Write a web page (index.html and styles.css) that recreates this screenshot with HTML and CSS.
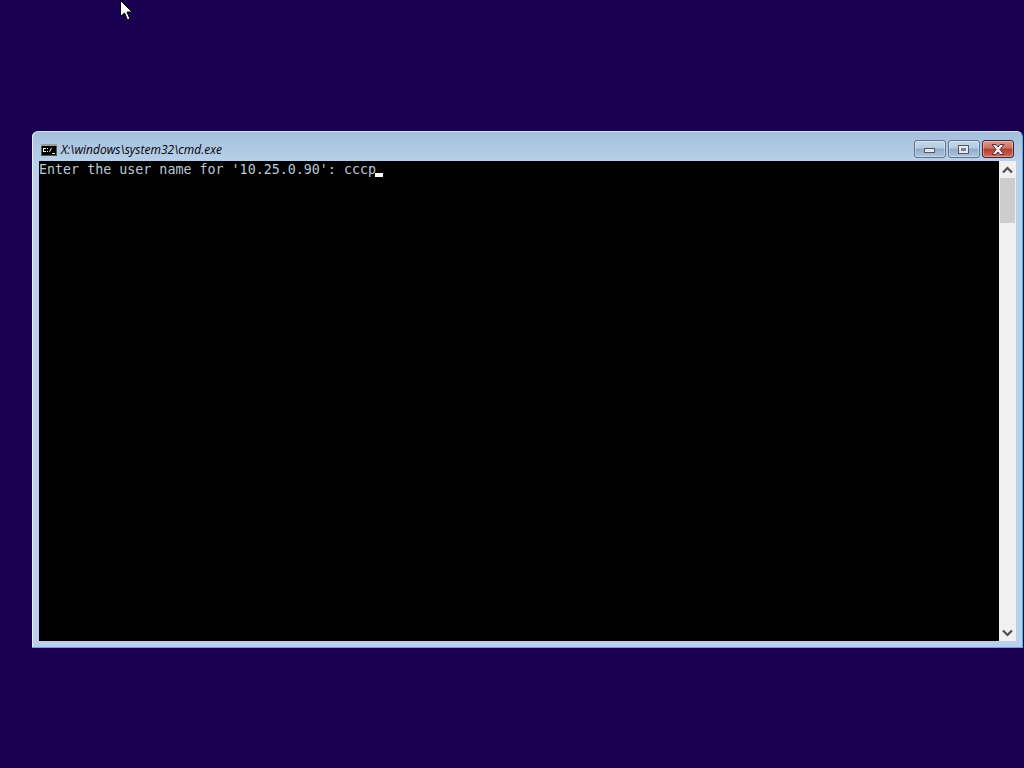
FILE: index.html
```html
<!DOCTYPE html>
<html lang="en">
<head>
<meta charset="utf-8">
<title>cmd.exe</title>
<link rel="stylesheet" href="styles.css">
</head>
<body>
<svg class="cursor" width="13" height="22" viewBox="0 0 13 22"><path d="M.5.5V16.5L4.5 13L7.5 20L10 19L7 12H12Z" fill="#fff" stroke="#000"/></svg>
<div class="window">
  <div class="titlebar">
    <svg class="app-icon" width="16" height="12" viewBox="0 0 16 12"><rect width="16" height="12" fill="#555"/><rect y="0" width="16" height="2" fill="#9a9a9a"/><rect x="1" y="2" width="14" height="9" fill="#000"/><path d="M2 4h3v1H3v2h2v1H2zM6 4h1v1H6zM6 7h1v1H6zM8 8l2-4h1l-2 4zM11 9h3v1h-3z" fill="#eee"/></svg>
    <span class="title">X:\windows\system32\cmd.exe</span>
    <div class="controls">
      <div class="btn"><span class="min-glyph"></span></div>
      <div class="btn"><span class="max-glyph"></span></div>
      <div class="btn close"><svg width="14" height="11" viewBox="0 0 14 11"><path d="M1 .5H5L7 3L9 .5H13L9 5.5L13 10.5H9L7 8L5 10.5H1L5 5.5Z" fill="#eee" stroke="#5a3038"/></svg></div>
    </div>
  </div>
  <div class="body">
    <div class="console"><span class="line">Enter the user name for '10.25.0.90': cccp</span><span class="caret"></span></div>
    <div class="scrollbar">
      <div class="arrow"><svg width="11" height="8" viewBox="0 0 11 8"><path d="M1 6.5L5.5 2L10 6.5" fill="none" stroke="#505050" stroke-width="2.2"/></svg></div>
      <div class="thumb"></div>
      <div class="spacer"></div>
      <div class="arrow"><svg width="11" height="8" viewBox="0 0 11 8"><path d="M1 1.5L5.5 6L10 1.5" fill="none" stroke="#505050" stroke-width="2.2"/></svg></div>
    </div>
  </div>
</div>
</body>
</html>
```
FILE: styles.css
```css
html, body {
  margin: 0;
  height: 100%;
  overflow: hidden;
  background: #1a0050;
}
.cursor {
  position: absolute;
  left: 120px;
  top: 0;
}
.window {
  position: absolute;
  left: 32px;
  top: 131px;
  width: 991px;
  height: 517px;
  box-sizing: border-box;
  padding: 0 6px 6px 7px;
  display: flex;
  flex-direction: column;
  border-radius: 6px 6px 0 0;
  background: linear-gradient(180deg, #a3bfdb 0, #b9d1ea 30px, #b9d1ea 100%);
  border-top: 1px solid #d5e3f0;
  border-right: 1px solid #32c0d8;
  border-bottom: 1px solid #32c0d8;
  box-shadow: inset 1px 0 #e6eef6;
}
.titlebar {
  height: 29px;
  display: flex;
  flex: none;
  padding-left: 2px;
}
.app-icon {
  flex: none;
  margin-top: 12px;
}
.title {
  margin-left: 4px;
  margin-top: 9px;
  font: italic 12px "Open Sans", sans-serif;
  color: #000;
  letter-spacing: 0;
}
.controls {
  margin-left: auto;
  display: flex;
  gap: 2px;
  margin-top: 8px;
  margin-right: 2px;
  height: 18px;
}
.btn {
  width: 30px;
  height: 16px;
  border: 1px solid #5d7390;
  border-radius: 3px;
  display: flex;
  align-items: center;
  justify-content: center;
  background: linear-gradient(180deg, #c6d8ea 0, #b4cadf 45%, #8fabc8 50%, #aec6dc 100%);
  box-shadow: inset 0 0 0 1px rgba(255,255,255,.35);
}
.min-glyph {
  width: 9px;
  height: 3px;
  margin: 3px 1px 0 0;
  background: #e8e8f0;
  border: 1px solid #505868;
}
.max-glyph {
  width: 5px;
  height: 3px;
  margin-right: 1px;
  background: #7088a0;
  border: 2px solid #e4e8f0;
  outline: 1px solid #505868;
}
.close {
  border-color: #4a2030;
  background: linear-gradient(180deg, #dc9a8e 0, #cf6f60 45%, #b8382a 50%, #c87060 100%);
}
.body {
  flex: 1;
  min-height: 0;
  display: flex;
}
.console {
  width: 960px;
  flex: none;
  background: #000;
  padding-top: 1px;
  box-sizing: border-box;
  font: 13.33px/16px "DejaVu Sans Mono", monospace;
  color: #bcc8d4;
  white-space: pre;
}
.caret {
  display: inline-block;
  width: 8px;
  height: 4px;
  margin-left: -1px;
  background: #fff;
  vertical-align: -3px;
}
.scrollbar {
  width: 17px;
  flex: none;
  display: flex;
  flex-direction: column;
  background: #f0f0f0;
}
.arrow {
  height: 17px;
  flex: none;
  display: flex;
  align-items: center;
  justify-content: center;
}
.thumb {
  height: 45px;
  flex: none;
  margin: 0 1px;
  background: #cdcdcd;
}
.spacer {
  flex: 1;
}
```
